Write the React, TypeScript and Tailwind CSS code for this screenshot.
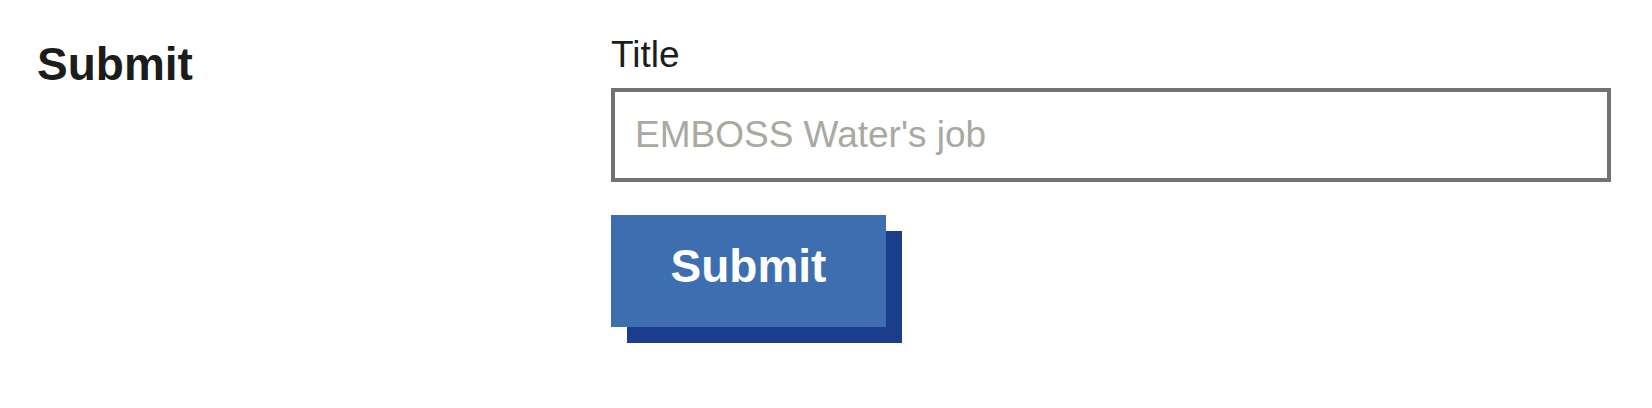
import React from "react";

export default function App() {
  return (
    <div className="min-h-screen w-full bg-white font-['Liberation_Sans',Arial,sans-serif] text-[#1c1c1c]">
      <div className="flex flex-row pl-[37px] pr-[41px]">
        {/* coluna do título */}
        <div className="w-[574px] shrink-0 pt-[36px]">
          <h2 className="text-[46px] leading-[56px] font-bold">Submit</h2>
        </div>

        {/* formulário */}
        <div className="flex flex-col w-[1000px] pt-[33px]">
          <label htmlFor="title" className="text-[37px] leading-[44px] mb-[11px]">
            Title
          </label>
          <input
            id="title"
            type="text"
            placeholder="EMBOSS Water's job"
            className="w-full h-[94px] border-4 border-[#727272] px-5 text-[37px] text-[#1c1c1c] placeholder:text-[#a9a99f] outline-none bg-white"
          />
          <div className="mt-[33px]">
            <button className="w-[275px] h-[112px] bg-[#3c6eb0] text-white text-[46px] font-bold shadow-[16px_16px_0_#1a3e8c] pb-[10px]">
              Submit
            </button>
          </div>
        </div>
      </div>
    </div>
  );
}
